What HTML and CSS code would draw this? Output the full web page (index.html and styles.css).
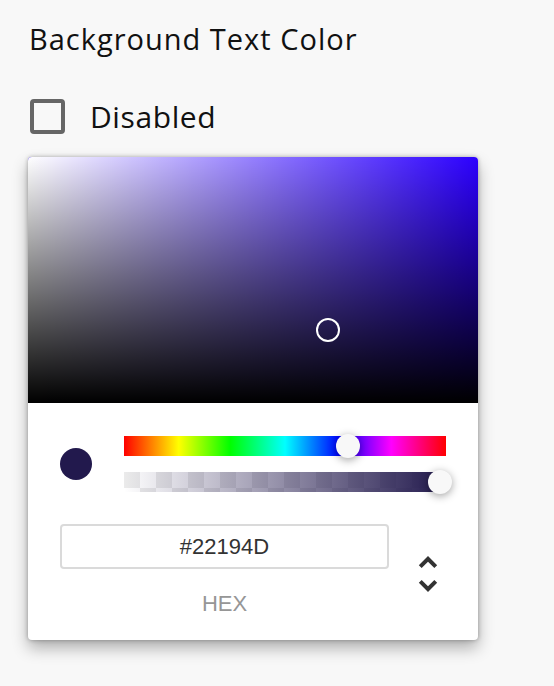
FILE: index.html
```html
<!DOCTYPE html>
<html>
<head>
<meta charset="utf-8">
<link rel="stylesheet" href="styles.css">
</head>
<body>
<div class="page">
  <div class="title">Background Text Color</div>
  <label class="check-row">
    <span class="checkbox"></span>
    <span class="check-label">Disabled</span>
  </label>
  <div class="card">
    <div class="saturation">
      <div class="sat-white"></div>
      <div class="sat-black"></div>
      <div class="sat-pointer"></div>
    </div>
    <div class="body">
      <div class="controls">
        <div class="swatch-col"><div class="swatch"></div></div>
        <div class="toggles">
          <div class="hue"><div class="slider-pointer hue-pointer"></div></div>
          <div class="alpha">
            <div class="alpha-grad"></div>
            <div class="slider-pointer alpha-pointer"></div>
          </div>
        </div>
      </div>
      <div class="fields">
        <div class="field">
          <input class="hex-input" value="#22194D" readonly>
          <span class="hex-label">hex</span>
        </div>
        <div class="toggle">
          <svg class="toggle-icon" viewBox="0 0 24 24" width="48" height="48">
            <path fill="#333" d="M12,5.83L15.17,9L16.58,7.59L12,3L7.41,7.59L8.83,9L12,5.83Z"/>
            <path fill="#333" d="M12,18.17L8.83,15L7.42,16.41L12,21L16.59,16.41L15.17,15L12,18.17Z"/>
          </svg>
        </div>
      </div>
    </div>
  </div>
</div>
</body>
</html>
```
FILE: styles.css
```css
html, body {
  margin: 0;
  padding: 0;
  background: #f8f8f8;
}
.page {
  padding: 20px 0 40px 28px;
  font-family: "Open Sans", "Noto Sans", sans-serif;
  color: #111;
}
.title {
  margin-left: 1px;
  font-size: 29px;
  letter-spacing: 1px;
  line-height: 38px;
}
.check-row {
  display: flex;
  align-items: center;
  margin-top: 40px;
  height: 36px;
}
.checkbox {
  box-sizing: border-box;
  width: 35px;
  height: 35px;
  margin-left: 2px;
  border: 4px solid #666;
  border-radius: 4px;
}
.check-label {
  margin-left: 25px;
  padding-top: 2px;
  font-size: 30px;
  letter-spacing: 0.6px;
  line-height: 38px;
}
.card {
  margin-top: 23px;
  width: 450px;
  background: #fff;
  border-radius: 4px;
  box-shadow: 0 0 4px rgba(0,0,0,.3), 0 8px 16px rgba(0,0,0,.3);
  font-family: "Liberation Sans", Arial, sans-serif;
}
.saturation {
  position: relative;
  height: 246px;
  border-radius: 4px 4px 0 0;
  overflow: hidden;
  background: rgb(44, 0, 255);
}
.sat-white, .sat-black {
  position: absolute;
  inset: 0;
}
.sat-white {
  background: linear-gradient(to right, #fff, rgba(255,255,255,0));
}
.sat-black {
  background: linear-gradient(to top, #000, rgba(0,0,0,0));
}
.sat-pointer {
  position: absolute;
  left: 288px;
  top: 161px;
  width: 24px;
  height: 24px;
  border-radius: 50%;
  box-shadow: inset 0 0 0 2px #fff;
}
.body {
  padding: 33px 32px 25px;
}
.controls {
  display: flex;
}
.swatch-col {
  width: 64px;
  flex: none;
}
.swatch {
  margin-top: 12px;
  width: 32px;
  height: 32px;
  border-radius: 50%;
  background: #22194d;
}
.toggles {
  flex: 1;
}
.hue {
  position: relative;
  height: 20px;
  margin-bottom: 16px;
  background: linear-gradient(to right, #f00 0%, #ff0 17%, #0f0 33%, #0ff 50%, #00f 67%, #f0f 83%, #f00 100%);
}
.alpha {
  position: relative;
  height: 20px;
  background-color: #fff;
  background-image: conic-gradient(transparent 0 25%, rgba(0,0,0,.08) 0 50%, transparent 0 75%, rgba(0,0,0,.08) 0);
  background-size: 32px 32px;
}
.alpha-grad {
  position: absolute;
  inset: 0;
  background: linear-gradient(to right, rgba(34,25,77,0), rgba(34,25,77,1));
}
.slider-pointer {
  position: absolute;
  top: -2px;
  width: 24px;
  height: 24px;
  border-radius: 50%;
  background: #f8f8f8;
  box-shadow: 0 2px 8px 0 rgba(0,0,0,.37);
  transform: translateX(-12px);
}
.hue-pointer {
  left: 69.6%;
}
.alpha-pointer {
  left: 316px;
}
.fields {
  display: flex;
  padding-top: 32px;
}
.field {
  width: 329px;
  flex: none;
  display: flex;
  flex-direction: column;
}
.hex-input {
  box-sizing: border-box;
  width: 100%;
  height: 45px;
  border: none;
  border-radius: 4px;
  box-shadow: inset 0 0 0 2px #dadada;
  font-family: "Liberation Sans", Arial, sans-serif;
  font-size: 22px;
  color: #333;
  text-align: center;
  padding: 0;
  outline: none;
  background: #fff;
}
.hex-label {
  display: block;
  margin-top: 24px;
  font-size: 22px;
  line-height: 22px;
  color: #969696;
  text-align: center;
  text-transform: uppercase;
}
.toggle {
  flex: 1;
}
.toggle-icon {
  display: block;
  margin-left: 15px;
  margin-top: 26px;
}
```
